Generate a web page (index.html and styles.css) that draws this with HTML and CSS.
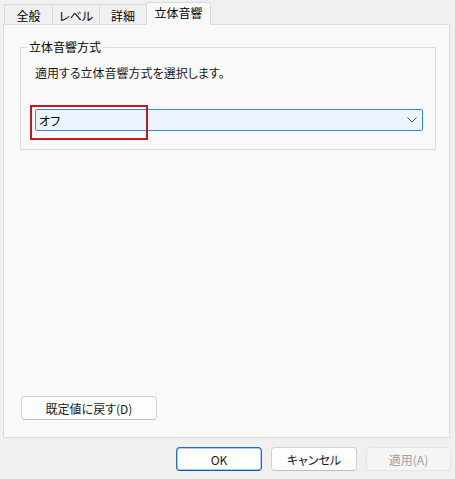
FILE: index.html
```html
<!DOCTYPE html>
<html lang="ja">
<head>
<meta charset="utf-8">
<title>立体音響</title>
<link rel="stylesheet" href="styles.css">
</head>
<body>
<div class="dialog">
  <div class="tabs">
    <div class="tab t1">全般</div>
    <div class="tab t2">レベル</div>
    <div class="tab t3">詳細</div>
    <div class="tab active">立体音響</div>
  </div>
  <div class="panel">
    <fieldset class="group">
      <legend>立体音響方式</legend>
      <div class="group-body">
        <p class="desc">適用する立体音響方式を選択します。</p>
        <div class="combo-wrap">
          <div class="combo">
            <span>オフ</span>
            <svg class="chev" width="10" height="6" viewBox="0 0 10 6"><polyline points="0.5,0.5 5,5 9.5,0.5" fill="none" stroke="#555" stroke-width="1"/></svg>
          </div>
          <div class="highlight"></div>
        </div>
      </div>
    </fieldset>
    <button class="btn reset">既定値に戻す(D)</button>
  </div>
  <div class="footer">
    <button class="btn primary">OK</button>
    <button class="btn">キャンセル</button>
    <button class="btn apply" disabled>適用(A)</button>
  </div>
</div>
</body>
</html>
```
FILE: styles.css
```css
html, body {
  margin: 0;
}
body {
  background: #f0f0f0;
  font-family: "Noto Sans CJK JP", "Noto Sans", sans-serif;
  font-size: 12px;
  color: #000;
  font-feature-settings: "palt" 1;
  width: 455px;
  height: 479px;
  overflow: hidden;
}
.dialog {
  padding: 2px 5px 0 3px;
  display: flex;
  flex-direction: column;
}
.tabs {
  display: flex;
  align-items: flex-end;
  height: 22px;
  padding-left: 1px;
}
.tab {
  box-sizing: border-box;
  height: 20px;
  border: 1px solid #dadada;
  border-bottom: none;
  margin-right: -1px;
  display: flex;
  align-items: center;
  justify-content: center;
  line-height: 1;
  background: #f0f0f0;
  padding-top: 2px;
}
.t1 { width: 49px; }
.t2 { width: 48px; }
.t3 { width: 48px; }
.tab.active {
  width: 65px;
  height: 23px;
  margin-bottom: -1px;
  padding-top: 0;
  padding-bottom: 2px;
  background: #f9f9f9;
  position: relative;
  z-index: 1;
}
.panel {
  box-sizing: border-box;
  height: 414px;
  border: 1px solid #dcdcdc;
  background: #f9f9f9;
  padding: 14px 13px 17px 16px;
  display: flex;
  flex-direction: column;
}
.group {
  margin: 0;
  padding: 0;
  min-width: 0;
  border: 1px solid #dcdcdc;
}
.group legend {
  margin-left: 6px;
  padding: 0 2px;
  line-height: 16px;
}
.group-body {
  padding: 10px 12px 18px 14px;
}
.desc {
  margin: 0;
  line-height: 16px;
  color: #1a1a1a;
}
.combo-wrap {
  position: relative;
  margin-top: 28px;
}
.combo {
  box-sizing: border-box;
  height: 22px;
  border: 1px solid #3b87d4;
  border-radius: 2px;
  background: #ebf3fd;
  display: flex;
  align-items: center;
  justify-content: space-between;
  padding: 0 5px 0 3px;
}
.chev {
  display: block;
}
.highlight {
  position: absolute;
  left: -5px;
  top: -4px;
  width: 118px;
  height: 35px;
  box-sizing: border-box;
  border: 2px solid #c8171e;
}
.btn {
  box-sizing: border-box;
  height: 24px;
  border: 1px solid #d3d3d3;
  border-bottom-color: #bdbdbd;
  border-radius: 4px;
  background: #fdfdfd;
  font: inherit;
  color: #1a1a1a;
  padding: 0;
}
.reset {
  margin-top: auto;
  margin-left: 1px;
  width: 136px;
  align-self: flex-start;
}
.footer {
  display: flex;
  justify-content: flex-end;
  gap: 9px;
  margin-top: 9px;
  margin-right: -1px;
}
.footer .btn {
  width: 86px;
}
.footer .apply {
  width: 85px;
}
.btn.primary {
  border: 1px solid #1a72c6;
  border-bottom-color: #0a5bab;
  box-shadow: inset 0 0 0 0.5px #5c9ad6;
}
.btn:disabled {
  color: #a0a0a0;
  background: #f5f5f5;
  border-color: #e5e5e5;
}
```
